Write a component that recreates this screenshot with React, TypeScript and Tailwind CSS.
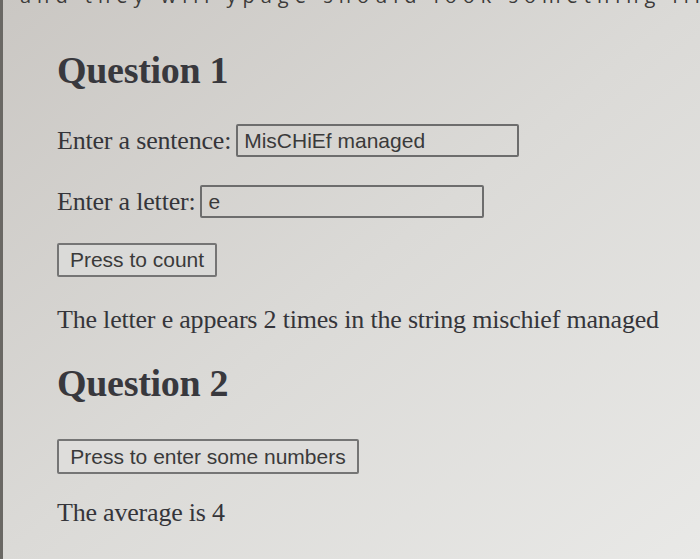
export default function App() {
  return (
    <main className="relative h-[559px] w-[700px] overflow-hidden bg-gradient-to-br from-[#cac7c3] via-[#dbdad7] to-[#e9e9e7] text-[#35353a]">
      {/* left screen edge */}
      <div className="absolute left-0 top-0 h-full w-[3px] bg-[#6a6864]" />

      {/* clipped line from the page above */}
      <div className="h-[8px] overflow-hidden pl-[20px]">
        <p className="-mt-[19px] whitespace-nowrap font-['Open_Sans',sans-serif] text-[20px] tracking-[6px] text-[#3c3b3a]">
          and they will ypage should look something like the screenshot
        </p>
      </div>

      <section className="pl-[57px] font-['Liberation_Serif',serif]">
        <h1 className="mt-[42px] text-[38px] font-bold leading-[40px] tracking-[-0.3px] text-[#38383d]">
          Question 1
        </h1>

        <div className="mt-[31px] flex items-center gap-[5px] text-[26px]">
          <span className="tracking-[-0.2px]">Enter a sentence:</span>
          <div className="flex h-[33px] w-[283px] items-center rounded-[2px] border-2 border-[#6d6d6d] px-[6px] font-['Liberation_Sans',sans-serif] text-[21px] text-[#3a3a3a]">
            MisCHiEf managed
          </div>
        </div>

        <div className="mt-[22px] flex items-center gap-[5px] text-[26px]">
          <span className="tracking-[-0.2px]">Enter a letter:</span>
          <div className="flex h-[33px] w-[284px] items-center rounded-[2px] border-2 border-[#6d6d6d] px-[6px] font-['Liberation_Sans',sans-serif] text-[21px] text-[#3a3a3a]">
            e
          </div>
        </div>

        <button className="mt-[22px] flex h-[34px] w-[160px] items-center justify-center rounded-[2px] border-2 border-[#757575] bg-[#dadad8] font-['Liberation_Sans',sans-serif] text-[21px] text-[#3a3a3a]">
          Press to count
        </button>

        <p className="mt-[27px] text-[26px] leading-[32px] tracking-[-0.2px]">
          The letter e appears 2 times in the string mischief managed
        </p>

        <h2 className="mt-[27px] text-[38px] font-bold leading-[40px] tracking-[-0.3px] text-[#38383d]">
          Question 2
        </h2>

        <button className="mt-[36px] flex h-[35px] w-[302px] items-center justify-center rounded-[2px] border-2 border-[#757575] bg-[#dedddb] font-['Liberation_Sans',sans-serif] text-[21px] text-[#3a3a3a]">
          Press to enter some numbers
        </button>

        <p className="mt-[23px] text-[26px] leading-[32px] tracking-[-0.2px]">
          The average is 4
        </p>
      </section>
    </main>
  );
}
